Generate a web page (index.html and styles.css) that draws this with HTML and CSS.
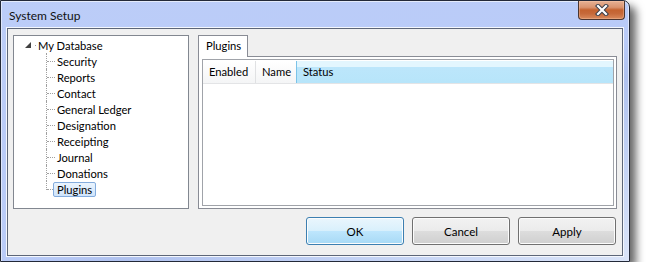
FILE: index.html
```html
<!DOCTYPE html>
<html>
<head>
<meta charset="utf-8">
<link rel="stylesheet" href="styles.css">
</head>
<body>
<div class="window">
  <div class="titlebar">
    <span class="title">System Setup</span>
    <div class="close">
      <svg width="20" height="12" viewBox="0 0 20 12">
        <path d="M6 2 L14 10 M14 2 L6 10" stroke="#3a3f4a" stroke-width="4.2" stroke-linecap="square" fill="none"/>
        <path d="M6 2 L14 10 M14 2 L6 10" stroke="#ffffff" stroke-width="2.2" stroke-linecap="square" fill="none"/>
      </svg>
    </div>
  </div>
  <div class="client">
    <div class="top">
      <div class="tree">
        <div class="root">
          <svg class="expander" width="6" height="6" viewBox="0 0 6 6"><path d="M6 0 L6 6 L0 6 Z" fill="#404040"/></svg>
          <span class="rootdot"></span>
          <span class="label">My Database</span>
        </div>
        <ul class="children">
          <li><span class="label">Security</span></li>
          <li><span class="label">Reports</span></li>
          <li><span class="label">Contact</span></li>
          <li><span class="label">General Ledger</span></li>
          <li><span class="label">Designation</span></li>
          <li><span class="label">Receipting</span></li>
          <li><span class="label">Journal</span></li>
          <li><span class="label">Donations</span></li>
          <li><span class="label selected">Plugins</span></li>
        </ul>
      </div>
      <div class="tabs">
        <div class="tabstrip"><div class="tab">Plugins</div></div>
        <div class="page">
          <div class="listview">
            <div class="header">
              <div class="col c-enabled">Enabled</div>
              <div class="col c-name">Name</div>
              <div class="col c-status">Status</div>
            </div>
          </div>
        </div>
      </div>
    </div>
    <div class="buttons">
      <button class="btn default">OK</button>
      <button class="btn">Cancel</button>
      <button class="btn">Apply</button>
    </div>
  </div>
</div>
</body>
</html>
```
FILE: styles.css
```css
html, body {
  margin: 0;
  padding: 0;
  background: #ffffff;
}
body {
  font-family: "Lato", "Liberation Sans", sans-serif;
  font-size: 11.2px;
  color: #000;
}
.window {
  box-sizing: border-box;
  width: 630px;
  height: 262px;
  border: 1px solid #232938;
  border-radius: 0 7px 0 0;
  padding: 0 6px 5px 6px;
  display: flex;
  flex-direction: column;
  background: linear-gradient(160deg, #bccdf8 0%, #b9cbf8 55%, #b0c2ef 62%, #c4d3f5 80%, #dae4f8 100%);
  box-shadow: 6px 6px 8px rgba(0,0,0,0.6), inset 0 1px 0 #e4ebfb, inset 1px 0 0 #dfe7fb, inset -1px 0 0 #dfe7fb;
}
.titlebar {
  height: 27px;
  display: flex;
  align-items: flex-start;
  justify-content: space-between;
}
.title {
  margin-top: 7px;
  margin-left: 2px;
  font-size: 12px;
  color: #111;
}
.close {
  width: 47px;
  height: 19px;
  box-sizing: border-box;
  border: 1px solid #4a3530;
  border-top: none;
  border-radius: 0 0 4px 4px;
  margin-right: -2px;
  background: linear-gradient(#e6b194 0%, #d99470 35%, #c4622f 50%, #c6693a 70%, #d98a5c 100%);
  display: flex;
  align-items: center;
  justify-content: center;
  box-shadow: inset 0 0 0 1px rgba(255,210,180,0.35);
}
.client {
  flex: 1;
  border: 1px solid #5d6678;
  background: #f0f0f0;
  box-shadow: 0 0 0 1px #f4f7fd;
  display: flex;
  flex-direction: column;
  padding: 6px 5px 0 5px;
}
.top {
  display: flex;
  gap: 9px;
  height: 174px;
}
.tree {
  box-sizing: border-box;
  width: 176px;
  height: 174px;
  border: 1px solid #828790;
  background: #ffffff;
  padding-top: 1px;
}
.root {
  height: 16px;
  display: flex;
  align-items: center;
  padding-left: 11px;
}
.expander {
  display: block;
  margin-top: -1px;
}
.rootdot {
  width: 1px;
  height: 1px;
  background: #a0a0a0;
  margin: 0 2px 0 4px;
}
.root .label {
  padding: 0;
}
.children {
  list-style: none;
  margin: 0;
  padding: 0;
  margin-left: 32px;
}
.children li {
  position: relative;
  height: 16px;
  display: flex;
  align-items: center;
  padding-left: 7px;
}
.children li::before {
  content: "";
  position: absolute;
  left: 1px;
  top: 8px;
  width: 8px;
  border-top: 1px dotted #a0a0a0;
}
.children li::after {
  content: "";
  position: absolute;
  left: 0;
  top: 0;
  bottom: 0;
  border-left: 1px dotted #a0a0a0;
}
.children li:last-child::after {
  bottom: 7px;
}
.children .label {
  box-sizing: border-box;
  height: 15px;
  line-height: 13px;
  padding: 0 3px;
  border: 1px solid transparent;
  border-radius: 2px;
  position: relative;
  z-index: 1;
}
.children .label.selected {
  border-color: #84acdd;
  background: linear-gradient(#eaf4fe, #cfe4fb);
}
.tabs {
  width: 419px;
  display: flex;
  flex-direction: column;
}
.tabstrip {
  height: 21px;
  display: flex;
}
.tab {
  box-sizing: border-box;
  width: 50px;
  height: 22px;
  border: 1px solid #898c95;
  border-bottom: none;
  background: #ffffff;
  padding: 3px 0 0 7px;
  position: relative;
  z-index: 1;
}
.page {
  flex: 1;
  box-sizing: border-box;
  border: 1px solid #898c95;
  background: #ffffff;
  padding: 2px 2px 2px 3px;
  display: flex;
}
.listview {
  flex: 1;
  border: 1px solid #a0a3a9;
  background: #ffffff;
  padding-top: 1px;
}
.header {
  height: 22px;
  display: flex;
  background: linear-gradient(#ffffff, #f4f5f6);
  border-bottom: 1px solid #e3e4e6;
}
.col {
  box-sizing: border-box;
  height: 22px;
  line-height: 21px;
  padding-left: 6px;
}
.c-enabled {
  width: 53px;
  border-right: 1px solid #e0e1e3;
}
.c-name {
  width: 41px;
  border-right: 1px solid #7cc3e8;
}
.c-status {
  flex: 1;
  background: linear-gradient(#e3f6fe 0%, #e3f6fe 27%, #bce6fb 28%, #b7e5fa 100%);
}
.buttons {
  display: flex;
  justify-content: flex-end;
  gap: 8px;
  margin-top: 8px;
  padding-right: 1px;
}
.btn {
  box-sizing: border-box;
  width: 98px;
  height: 28px;
  font-family: "Lato", "Liberation Sans", sans-serif;
  font-size: 11.5px;
  color: #000;
  border: 1px solid #707070;
  border-radius: 3px;
  background: linear-gradient(#f2f2f2 0%, #ebebeb 48%, #dddddd 50%, #cfcfcf 100%);
  box-shadow: inset 0 0 0 1px #fcfcfc;
  padding: 0;
}
.btn.default {
  border-color: #3c7fb1;
  background: linear-gradient(#eaf6fd 0%, #d9f0fc 48%, #bee6fd 50%, #a7d9f5 100%);
}
```
